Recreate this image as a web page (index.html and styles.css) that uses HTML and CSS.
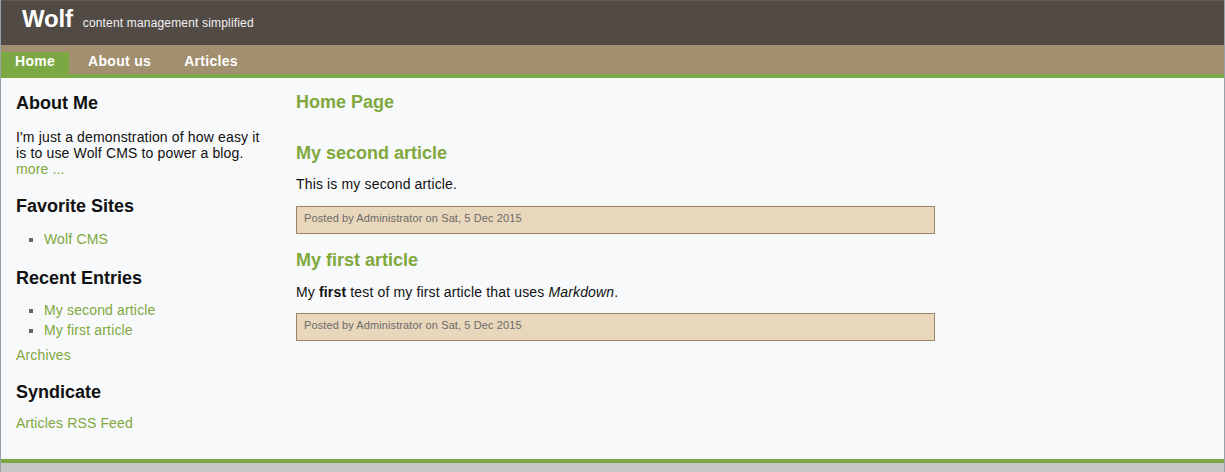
FILE: index.html
```html
<!DOCTYPE html>
<html>
<head>
<meta charset="utf-8">
<title>Wolf</title>
<link rel="stylesheet" href="styles.css">
</head>
<body>
<div class="page">
  <header class="masthead">
    <span class="logo">Wolf</span>
    <span class="slogan">content management simplified</span>
  </header>
  <nav class="nav">
    <a class="nav-item active" href="#">Home</a>
    <a class="nav-item" href="#">About us</a>
    <a class="nav-item" href="#">Articles</a>
  </nav>
  <div class="content">
    <aside class="sidebar">
      <h3 class="side-title first">About Me</h3>
      <p class="side-text">I'm just a demonstration of how easy it is to use Wolf CMS to power a blog. <a href="#">more ...</a></p>
      <h3 class="side-title">Favorite Sites</h3>
      <ul class="side-list">
        <li><a href="#">Wolf CMS</a></li>
      </ul>
      <h3 class="side-title">Recent Entries</h3>
      <ul class="side-list recent">
        <li><a href="#">My second article</a></li>
        <li><a href="#">My first article</a></li>
      </ul>
      <p class="side-link"><a href="#">Archives</a></p>
      <h3 class="side-title">Syndicate</h3>
      <p class="side-link rss"><a href="#">Articles RSS Feed</a></p>
    </aside>
    <main class="main">
      <h1 class="page-title">Home Page</h1>
      <article class="entry first-entry">
        <h2 class="entry-title"><a href="#">My second article</a></h2>
        <p class="entry-body">This is my second article.</p>
        <p class="info">Posted by Administrator on Sat, 5 Dec 2015</p>
      </article>
      <article class="entry">
        <h2 class="entry-title"><a href="#">My first article</a></h2>
        <p class="entry-body">My <strong>first</strong> test of my first article that uses <em>Markdown</em>.</p>
        <p class="info">Posted by Administrator on Sat, 5 Dec 2015</p>
      </article>
    </main>
  </div>
  <footer class="footer"></footer>
</div>
</body>
</html>
```

FILE: styles.css
```css
html, body {
  margin: 0;
  padding: 0;
}
body {
  background: #c8c8c8;
  font-family: "Liberation Sans", Arial, sans-serif;
  color: #111;
  height: 472px;
  overflow: hidden;
}
a {
  color: #80a83c;
  text-decoration: none;
}
.page {
  border-left: 1px solid #98a0a8;
  border-right: 1px solid #98a0a8;
  background: #f8f9fb;
}
.masthead {
  background: #514a45;
  border-top: 1px solid #625c57;
  height: 44px;
  box-sizing: content-box;
  padding: 0 0 0 21px;
  display: flex;
  align-items: baseline;
  gap: 10px;
  color: #fff;
}
.logo {
  font-size: 24px;
  font-weight: bold;
  line-height: 28px;
  padding-top: 4px;
  letter-spacing: -0.2px;
}
.slogan {
  font-size: 12px;
  color: #f2f2f2;
  letter-spacing: 0.17px;
}
.nav {
  background: #a28f70;
  height: 22px;
  padding-top: 7px;
  border-bottom: 4px solid #7ba843;
  display: flex;
  gap: 5px;
}
.nav-item {
  color: #fff;
  font-weight: bold;
  font-size: 14px;
  line-height: 19px;
  padding: 0 14px 3px;
  letter-spacing: 0.3px;
}
.nav-item.active {
  background: #7ba843;
}
.content {
  display: flex;
  gap: 30px;
  padding: 0 0 28px 15px;
}
.sidebar {
  width: 250px;
  flex: none;
}
.side-title {
  font-size: 18px;
  line-height: 21px;
  font-weight: bold;
  margin: 19px 0 0;
  color: #111;
}
.side-title.first {
  margin-top: 15px;
}
.side-text,
.side-list,
.side-link,
.entry-body {
  letter-spacing: 0.15px;
}
.side-text {
  font-size: 14px;
  line-height: 16px;
  margin: 15px 0 0;
}
.side-list {
  list-style: square;
  color: #666;
  margin: 12px 0 0;
  padding-left: 28px;
  font-size: 14px;
  line-height: 20px;
}
.side-list.recent {
  margin-top: 11px;
}
.side-link {
  font-size: 14px;
  line-height: 16px;
  margin: 7px 0 0;
}
.side-link.rss {
  margin-top: 12px;
}
.main {
  width: 639px;
  flex: none;
}
.page-title {
  color: #80a83c;
  font-size: 18px;
  line-height: 21px;
  margin: 14px 0 0;
}
.entry-title {
  font-size: 18px;
  line-height: 21px;
  margin: 16px 0 0;
}
.first-entry .entry-title {
  margin-top: 30px;
}
.entry-body {
  font-size: 14px;
  line-height: 16px;
  margin: 12px 0 0;
}
.entry + .entry .entry-body {
  margin-top: 13px;
}
.info {
  margin: 14px 0 0;
  background: #e8d7ba;
  border: 1px solid #9b8565;
  color: #6b6b6b;
  font-size: 11px;
  line-height: 13px;
  padding: 5px 7px 8px;
  letter-spacing: 0.1px;
}
.entry + .entry .info {
  margin-top: 13px;
}
.footer {
  border-top: 4px solid #7ba843;
  background: #c8c8c8;
  height: 20px;
}
```
